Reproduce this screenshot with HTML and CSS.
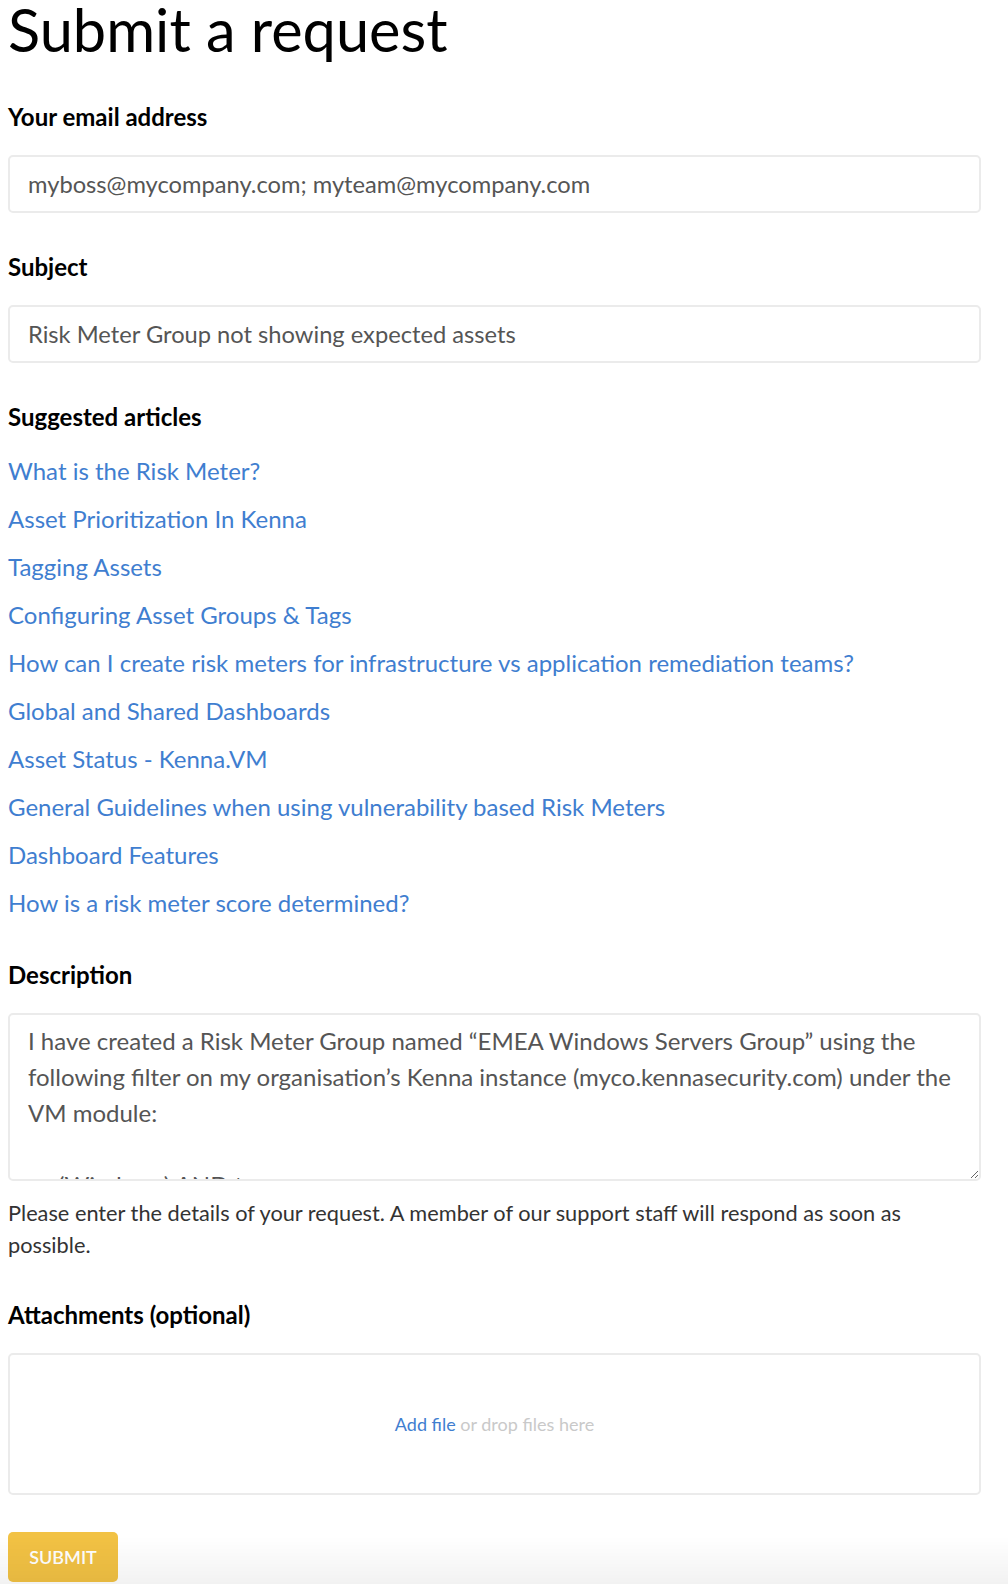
FILE: index.html
```html
<!DOCTYPE html>
<html lang="en">
<head>
<meta charset="utf-8">
<title>Submit a request</title>
<link rel="stylesheet" href="styles.css">
</head>
<body>
<main class="page">
  <h1 class="page-title">Submit a request</h1>
  <form class="request-form">
    <div class="field">
      <label class="field-label" for="email">Your email address</label>
      <input class="text-input" id="email" type="text" value="myboss@mycompany.com; myteam@mycompany.com">
    </div>
    <div class="field">
      <label class="field-label" for="subject">Subject</label>
      <input class="text-input" id="subject" type="text" value="Risk Meter Group not showing expected assets">
    </div>
    <div class="field field-articles">
      <div class="field-label">Suggested articles</div>
      <ul class="articles">
        <li><a href="#">What is the Risk Meter?</a></li>
        <li><a href="#">Asset Prioritization In Kenna</a></li>
        <li><a href="#">Tagging Assets</a></li>
        <li><a href="#">Configuring Asset Groups &amp; Tags</a></li>
        <li><a href="#">How can I create risk meters for infrastructure vs application remediation teams?</a></li>
        <li><a href="#">Global and Shared Dashboards</a></li>
        <li><a href="#">Asset Status - Kenna.VM</a></li>
        <li><a href="#">General Guidelines when using vulnerability based Risk Meters</a></li>
        <li><a href="#">Dashboard Features</a></li>
        <li><a href="#">How is a risk meter score determined?</a></li>
      </ul>
    </div>
    <div class="field field-description">
      <label class="field-label" for="description">Description</label>
      <textarea class="text-area" id="description">I have created a Risk Meter Group named “EMEA Windows Servers Group” using the following filter on my organisation’s Kenna instance (myco.kennasecurity.com) under the VM module:

os:(Windows) AND tag:emea</textarea>
      <p class="hint">Please enter the details of your request. A member of our support staff will respond as soon as possible.</p>
    </div>
    <div class="field">
      <div class="field-label">Attachments (optional)</div>
      <div class="dropzone">
        <span><a href="#" class="add-file">Add file</a> <span class="drop-text">or drop files here</span></span>
      </div>
    </div>
    <button class="submit" type="button">SUBMIT</button>
  </form>
</main>
<div class="bottom-fade"></div>
</body>
</html>
```
FILE: styles.css
```css
* { box-sizing: border-box; }

html, body {
  margin: 0;
  padding: 0;
  background: #fff;
}

body {
  font-family: Lato, "Open Sans", "Liberation Sans", sans-serif;
  color: #000;
}

.page {
  width: 973px;
  margin-left: 8px;
}

.page-title {
  margin: 0 0 43px;
  font-size: 59.5px;
  line-height: 59px;
  font-weight: 400;
  color: #000;
}

.request-form {
  display: flex;
  flex-direction: column;
}

.field {
  margin-bottom: 39px;
}

.field-label {
  display: block;
  font-size: 24px;
  line-height: 28px;
  font-weight: 700;
  color: #000;
  padding-top: 1px;
  margin-bottom: 24px;
}

.text-input {
  display: block;
  width: 100%;
  height: 58px;
  border: 2px solid #ebebeb;
  border-radius: 5px;
  padding: 0 18px;
  font-family: inherit;
  font-size: 23.7px;
  color: #555;
  background: #fff;
  outline: none;
}

.field-articles .field-label {
  margin-bottom: 16px;
}

.field-articles {
  margin-bottom: 33px;
}

.articles {
  list-style: none;
  margin: 0;
  padding: 0;
}

.articles li {
  font-size: 24px;
  line-height: 48px;
}

.articles a {
  color: #3f7ed0;
  text-decoration: none;
}

.text-area {
  display: block;
  width: 100%;
  height: 168px;
  border: 2px solid #ebebeb;
  border-radius: 5px;
  padding: 8px 18px;
  font-family: inherit;
  font-size: 24px;
  line-height: 36px;
  color: #555;
  background: #fff;
  resize: vertical;
  overflow: hidden;
  outline: none;
}

.hint {
  margin: 16px 0 0;
  font-size: 21.75px;
  line-height: 32px;
  color: #333;
}

.dropzone {
  height: 142px;
  border: 2px solid #ebebeb;
  border-radius: 5px;
  display: flex;
  align-items: center;
  justify-content: center;
  font-size: 18px;
}

.add-file {
  color: #3f7ed0;
  text-decoration: none;
}

.drop-text {
  color: #c9c9c9;
}

.submit {
  align-self: flex-start;
  margin-top: -2px;
  width: 110px;
  height: 50px;
  border: none;
  border-radius: 5px;
  background: #f2c244;
  color: #fff;
  font-family: inherit;
  font-size: 18px;
  font-weight: 600;
  padding: 0;
}

.bottom-fade {
  position: fixed;
  left: 0;
  right: 0;
  bottom: 0;
  height: 48px;
  background: linear-gradient(to bottom, rgba(0,0,0,0), rgba(0,0,0,0.05));
  pointer-events: none;
}
```
